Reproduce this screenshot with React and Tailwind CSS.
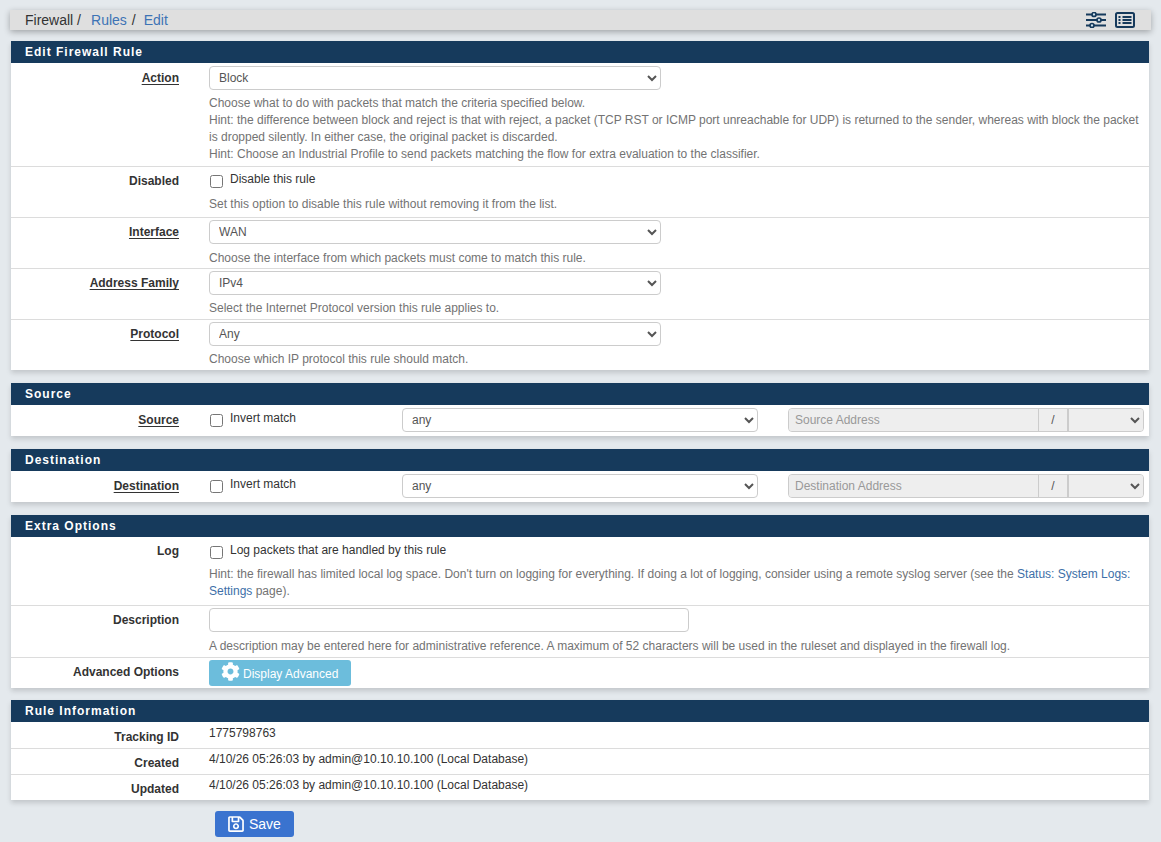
import React from "react";
import { FaCog, FaRegSave } from "react-icons/fa";

const FONT = "font-['Liberation_Sans',Arial,sans-serif]";

const Label = ({ children, required, nudge }) => (
  <div
    className={`w-[168px] shrink-0 text-right text-[12px] leading-[17px] font-bold text-[#333] ${
      nudge ? "pt-[7px]" : "pt-[6px]"
    }`}
  >
    {required ? <span className="underline underline-offset-2">{children}</span> : children}
  </div>
);

const Hint = ({ children }) => (
  <div className="mt-[5px] text-[12px] leading-[17px] text-[#737373]">{children}</div>
);

const Row = ({ label, required, nudge, children, className = "h-[50px]", top = "pt-[3px]" }) => (
  <div className={`flex border-b border-[#dcdcdc] last:border-b-0 ${className}`}>
    <Label required={required} nudge={nudge}>
      {label}
    </Label>
    <div className={`ml-[30px] min-w-0 flex-1 pr-[10px] ${top}`}>{children}</div>
  </div>
);

const Select = ({ value, className = "w-[452px]" }) => (
  <select
    defaultValue={value}
    className={`block h-[24px] rounded-[4px] border border-[#ccc] bg-white pl-[5px] text-[12px] text-[#555] ${className}`}
  >
    <option>{value}</option>
  </select>
);

const Check = ({ label }) => (
  <label className="flex h-[18px] items-start text-[12px] leading-[17px] text-[#333]">
    <input type="checkbox" className="ml-[1px] mt-[6px] h-[13px] w-[13px] shrink-0" />
    <span className="ml-[7px] mt-[2px]">{label}</span>
  </label>
);

const Panel = ({ title, children, className = "" }) => (
  <section className={`bg-white shadow-[0_3px_5px_rgba(0,0,0,0.15)] ${className}`}>
    <h2 className="flex h-[22px] items-center bg-[#163a5c] pl-[14px] text-[12px] font-bold tracking-[1px] text-white">
      {title}
    </h2>
    {children}
  </section>
);

// source / destination row with the address group on the right
const AddressRow = ({ label, placeholder }) => (
  <div className="flex h-[31px]">
    <Label required nudge>
      {label}
    </Label>
    <div className="ml-[30px] flex flex-1 pt-[3px]">
      <div className="w-[193px]">
        <Check label="Invert match" />
      </div>
      <Select value="any" className="w-[356px]" />
      <div className="ml-[30px] flex h-[24px] w-[356px] overflow-hidden rounded-[4px] border border-[#ccc] bg-[#eee] text-[12px]">
        <input
          disabled
          placeholder={placeholder}
          className="h-full w-[249px] bg-[#eee] pl-[6px] placeholder:text-[#999]"
        />
        <span className="flex w-[29px] items-center justify-center border-l border-[#ccc] text-[#555]">/</span>
        <select disabled className="h-full flex-1 border-l-2 border-[#ccc] bg-[#eee] text-[#555] opacity-100">
          <option></option>
        </select>
      </div>
    </div>
  </div>
);

const Link = ({ children }) => <a className="text-[#3d6fa8]">{children}</a>;

const SlidersIcon = () => (
  <svg width="20" height="16" viewBox="0 0 20 16" fill="none" stroke="#163a5c">
    <path d="M0 2.500h20M0 8h20M0 13.500h20" strokeWidth="2" />
    <circle cx="8" cy="2.500" r="2" fill="#cfe0ea" strokeWidth="1.700" />
    <circle cx="13" cy="8" r="2" fill="#cfe0ea" strokeWidth="1.700" />
    <circle cx="6" cy="13.500" r="2" fill="#cfe0ea" strokeWidth="1.700" />
  </svg>
);

const ListIcon = () => (
  <svg width="20" height="16" viewBox="0 0 20 16" fill="none" stroke="#163a5c">
    <rect x="1" y="1" width="18" height="14" rx="1.500" strokeWidth="2" />
    <path d="M3.500 5h2M3.500 8h2M3.500 11h2M7.500 5h9M7.500 8h9M7.500 11h9" strokeWidth="1.800" />
  </svg>
);

const App = () => {
  return (
    <div className={`${FONT} min-h-screen overflow-hidden bg-[#e4e9ed] pb-[5px] pt-[10px]`}>
      {/* Breadcrumbs */}
      <div className="mx-[10px] flex h-[20px] items-center justify-between bg-[#dfdfdf] pl-[15px] pr-[16px] text-[14px] shadow-[0_2px_6px_rgba(0,0,0,0.3)]">
        <div className="text-[#333]">
          Firewall /
          <a className="ml-[10px] text-[#3d73b5]">Rules</a>
          <span className="ml-[5px]">/</span>
          <a className="ml-[8px] text-[#3d73b5]">Edit</a>
        </div>
        <div className="flex items-center gap-[9px]">
          <SlidersIcon />
          <ListIcon />
        </div>
      </div>

      <main className="ml-[11px] mr-[12px] mt-[11px] flex flex-col gap-[13px]">
        <Panel title="Edit Firewall Rule">
          <Row label="Action" required nudge className="h-[104px]">
            <Select value="Block" />
            <Hint>
              Choose what to do with packets that match the criteria specified below.
              <br />
              Hint: the difference between block and reject is that with reject, a packet (TCP RST or ICMP port
              unreachable for UDP) is returned to the sender, whereas with block the packet is dropped silently. In
              either case, the original packet is discarded.
              <br />
              Hint: Choose an Industrial Profile to send packets matching the flow for extra evaluation to the
              classifier.
            </Hint>
          </Row>
          <Row label="Disabled" className="h-[51px]" top="pt-[2px]">
            <Check label="Disable this rule" />
            <Hint>
              <span className="relative top-[4px]">Set this option to disable this rule without removing it from the list.</span>
            </Hint>
          </Row>
          <Row label="Interface" required className="h-[51px]" top="pt-[2px]">
            <Select value="WAN" />
            <Hint>
              <span className="relative top-[1px]">Choose the interface from which packets must come to match this rule.</span>
            </Hint>
          </Row>
          <Row label="Address Family" required className="h-[51px]" top="pt-[2px]">
            <Select value="IPv4" />
            <Hint>Select the Internet Protocol version this rule applies to.</Hint>
          </Row>
          <Row label="Protocol" required className="h-[50px]" top="pt-[2px]">
            <Select value="Any" />
            <Hint>Choose which IP protocol this rule should match.</Hint>
          </Row>
        </Panel>

        <Panel title="Source">
          <AddressRow label="Source" placeholder="Source Address" />
        </Panel>

        <Panel title="Destination">
          <AddressRow label="Destination" placeholder="Destination Address" />
        </Panel>

        <Panel title="Extra Options">
          <Row label="Log" className="h-[69px]">
            <Check label="Log packets that are handled by this rule" />
            <Hint>
              <span className="relative top-[3px] block">
                Hint: the firewall has limited local log space. Don't turn on logging for everything. If doing a lot of
                logging, consider using a remote syslog server (see the <Link>Status: System Logs:</Link>{" "}
                <Link>Settings</Link> page).
              </span>
            </Hint>
          </Row>
          <Row label="Description" className="h-[52px]" top="pt-[2px]">
            <input className="block h-[24px] w-[480px] rounded-[4px] border border-[#ccc] bg-white" />
            <Hint>
              <span className="relative top-[1px]">
                A description may be entered here for administrative reference. A maximum of 52 characters will be used
                in the ruleset and displayed in the firewall log.
              </span>
            </Hint>
          </Row>
          <Row label="Advanced Options" className="h-[30px]" top="pt-[2px]">
            <button className="flex h-[26px] w-[142px] items-center rounded-[3px] bg-[#6cbddc] pl-[12px] text-[12px] text-white">
              <FaCog size={19} className="mb-[3px]" />
              <span className="relative top-[1px] ml-[3px]">Display Advanced</span>
            </button>
          </Row>
        </Panel>

        <Panel title="Rule Information" className="-mt-[1px]">
          <Row label="Tracking ID" nudge className="h-[27px]">
            <div className="text-[12px] leading-[17px] text-[#333]">1775798763</div>
          </Row>
          <Row label="Created" className="h-[26px]" top="pt-[2px]">
            <div className="text-[12px] leading-[17px] text-[#333]">4/10/26 05:26:03 by admin@10.10.10.100 (Local Database)</div>
          </Row>
          <Row label="Updated" className="h-[25px]" top="pt-[2px]">
            <div className="text-[12px] leading-[17px] text-[#333]">4/10/26 05:26:03 by admin@10.10.10.100 (Local Database)</div>
          </Row>
        </Panel>

        <div className="-mt-[2px] pl-[204px]">
          <button className="flex h-[26px] w-[79px] items-center rounded-[3px] bg-[#3a73cf] pl-[12px] text-[14px] text-white">
            <FaRegSave size={18} />
            <span className="ml-[4px]">Save</span>
          </button>
        </div>
      </main>
    </div>
  );
};

export default App;
